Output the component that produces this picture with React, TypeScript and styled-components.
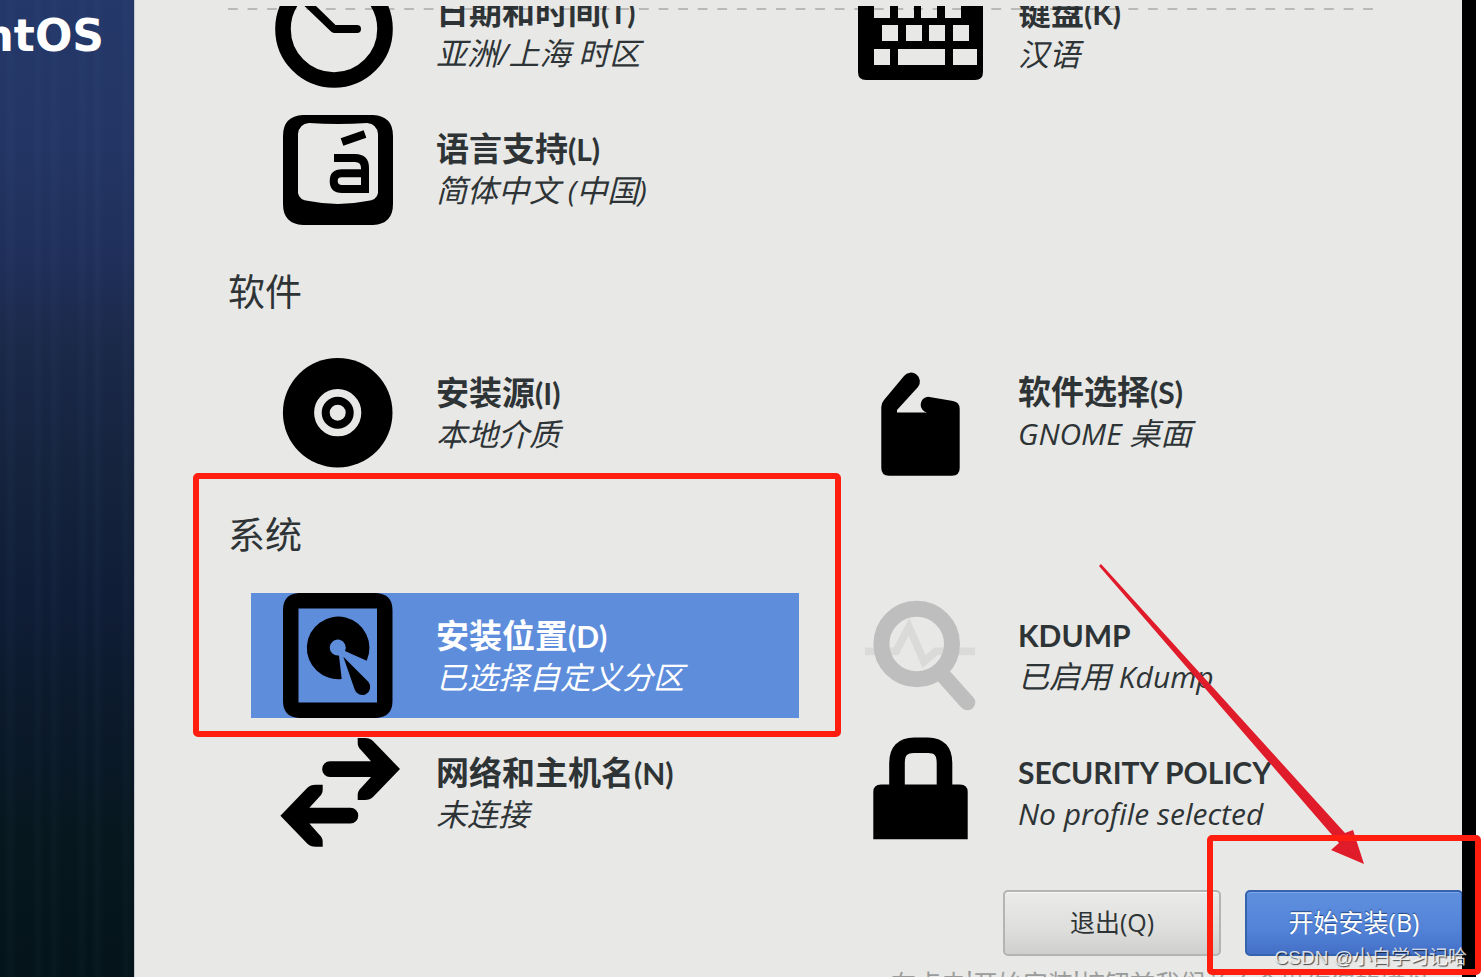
import React from "react";
import styled, { createGlobalStyle, css } from "styled-components";

const ink = "#2e3436";
const paper = "#e8e8e6";
const markRed = "#ff1e10";
const latinFonts = `"Open Sans", "Noto Sans CJK SC", sans-serif`;
const hanFonts = `"Noto Sans CJK SC", "Open Sans", sans-serif`;

const GlobalStyle = createGlobalStyle`
  * { box-sizing: border-box; }
  body { margin: 0; background: #fff; color: ${ink}; font-family: ${hanFonts}; }
  button { font: inherit; color: inherit; margin: 0; }
`;

const Page = styled.div`
  position: relative;
  display: flex;
  height: 100vh;
  padding-right: 7px;
  overflow: hidden;
`;

const Sidebar = styled.aside`
  flex: 0 0 134px;
  display: flex;
  justify-content: flex-end;
  align-items: flex-start;
  overflow: hidden;
  padding: 10px 30px 0 0;
  background:
    linear-gradient(
      to right,
      transparent 4px, rgba(120, 170, 220, 0.03) 10px, transparent 18px,
      transparent 32px, rgba(120, 170, 220, 0.03) 38px, transparent 44px,
      transparent 48px, rgba(120, 170, 220, 0.03) 54px, transparent 62px,
      transparent 76px, rgba(120, 170, 220, 0.03) 82px, transparent 88px,
      transparent 92px, rgba(120, 170, 220, 0.04) 97px, transparent 104px,
      transparent 120px, rgba(120, 170, 220, 0.03) 126px, transparent 132px
    ),
    linear-gradient(
      to bottom,
      #243869 0%, #233564 15%, #20305c 25%, #1b294a 35%,
      #15233d 48%, #101d37 61%, #0b192a 74%, #07171e 86%, #04141a 100%
    );
`;

const Brand = styled.div`
  font: 700 44px/52px "DejaVu Sans", sans-serif;
  color: #fff;
`;

const Panel = styled.main`
  position: relative;
  flex: 1;
  min-width: 0;
  overflow: hidden;
  background: ${paper};
  box-shadow: inset 1px 0 #c3c6cb;
`;

const BlackEdge = styled.div`
  flex: 0 0 14px;
  background: #000;
`;

const OverflowHint = styled.svg`
  position: absolute;
  top: 8px;
  left: 94px;
  width: calc(100% - 183px);
  height: 2px;
`;

const Scroller = styled.div`
  margin-top: 6px;
  overflow: hidden;
`;

const Hub = styled.div`
  margin-top: -36px;
`;

const SectionTitle = styled.h2`
  display: flex;
  align-items: center;
  height: 118px;
  margin: 0 0 0 94px;
  padding-bottom: 2px;
  font-size: 37px;
  font-weight: 400;
`;

const SpokeGrid = styled.div`
  display: grid;
  grid-template-columns: 1fr 1fr;
  gap: 12px 34px;
  padding: 0 81px 0 117px;
`;

const Spoke = styled.button<{ $selected?: boolean }>`
  display: flex;
  align-items: center;
  gap: 36px;
  height: 125px;
  padding: 0 0 0 24px;
  border: 0;
  text-align: left;
  background: none;
  ${(p) => p.$selected && css`
    background: #5e8ddc;
    color: #fff;
  `}
`;

const IconBox = styled.svg`
  flex: none;
  width: 125px;
  height: 125px;
  overflow: visible;
`;

const SpokeText = styled.span`
  display: grid;
  padding-bottom: 4px;
  white-space: nowrap;
`;

const SpokeName = styled.span`
  font-size: 33px;
  line-height: 42px;
  font-weight: 700;
`;

const SpokeStatus = styled.span`
  font-size: 31px;
  line-height: 38px;
  font-style: italic;
  font-weight: 400;
`;

const NameLatin = styled.span`
  font-family: Lato, sans-serif;
  font-size: 30px;
`;

const StatusLatin = styled.span`
  font-family: ${latinFonts};
  font-size: 30px;
`;

const Footer = styled.footer`
  display: grid;
  justify-items: end;
  gap: 11px;
  margin: 35px -1px 0 0;
`;

const Actions = styled.div`
  display: flex;
  gap: 24px;
`;

const ActionButton = styled.button<{ $primary?: boolean }>`
  width: 218px;
  height: 66px;
  padding: 0 0 5px;
  border: 2px solid #b4b5b2;
  border-radius: 5px;
  font-family: ${latinFonts};
  font-size: 25px;
  background: linear-gradient(#ebebea, #dededd 60%, #cfcfcd);
  box-shadow: inset 0 1px #f8f8f7;
  ${(p) => p.$primary && css`
    border-color: #3663ae;
    color: #fff;
    background: linear-gradient(#5f90de, #5283d8 60%, #4470c6);
    box-shadow: inset 0 1px #7aa5e8;
    text-shadow: 0 -1px 1px #24457f;
  `}
`;

const Note = styled.p`
  margin: 0 8px 0 0;
  font-size: 25px;
  line-height: 30px;
  white-space: nowrap;
  color: #9a9c9b;
`;

const MarkFrame = styled.div`
  position: absolute;
  border: 6px solid ${markRed};
  border-radius: 5px;
  pointer-events: none;
`;

const LocationMark = styled(MarkFrame)`
  top: 473px;
  left: 193px;
  width: calc(50% - 94px);
  height: 264px;
`;

const BeginMark = styled(MarkFrame)`
  top: 835px;
  right: 2px;
  width: 274px;
  height: 140px;
`;

const ArrowMark = styled.svg`
  position: absolute;
  top: 564px;
  right: 118px;
  width: 266px;
  height: 301px;
  pointer-events: none;
`;

const Watermark = styled.div`
  position: absolute;
  right: 16px;
  bottom: 5px;
  font: 400 19px/28px "Liberation Sans", "Noto Sans CJK SC", sans-serif;
  color: rgba(255, 255, 255, 0.8);
  text-shadow: 1px 1px 1px rgba(0, 0, 0, 0.7);
`;

const icons = {
  clock: (
    <>
      <circle cx="59" cy="59" r="51" fill="none" stroke="#000" strokeWidth="15.6" />
      <path d="M28 29 59 59H82" fill="none" stroke="#000" strokeWidth="8" strokeLinecap="round" strokeLinejoin="round" />
    </>
  ),
  keyboard: (
    <path
      fillRule="evenodd"
      d="M9 16H118Q126 16 126 24V102Q126 110 118 110H9Q1 110 1 102V24Q1 16 9 16Z
      M17 32V48H33V32ZM41 32V48H57V32ZM64 32V48H80V32ZM88 32V48H104V32Z
      M25 55V71H41V55ZM49 55V71H65V55ZM72 55V71H88V55ZM96 55V71H112V55Z
      M17 79V95H33V79ZM41 79V95H88V79ZM96 79V95H120V79Z"
    />
  ),
  language: (
    <>
      <path
        fillRule="evenodd"
        d="M28 8H98Q118 9 118 29V97Q118 117 98 118H28Q8 117 8 97V29Q8 9 28 8Z
        M23 27Q24 17 34 16Q63 18 92 16Q102 17 103 27V86Q102 93 92 94Q63 100 34 94Q24 93 23 86Z"
      />
      <path d="M67 35 90 27M59 51H80Q90 51 90 61V82H67Q58.7 82 58.7 74Q58.7 66.3 67 66.3H90" fill="none" stroke="#000" strokeWidth="8" />
    </>
  ),
  disc: (
    <>
      <circle cx="62.7" cy="62.7" r="54.8" />
      <circle cx="62.7" cy="62.7" r="19.8" fill="none" stroke={paper} strokeWidth="7.6" />
      <circle cx="62.7" cy="62.7" r="8" fill={paper} />
    </>
  ),
  package: (
    <path d="M24.3 57Q24.3 53 27 50L47 26A8.8 8.8 0 0 1 61 37L40 60V62.5H70A8 8 0 0 1 71 46.7L96 51Q102.7 52 102.7 59V118Q102.7 125.7 95 125.7H32Q24.3 125.7 24.3 118Z" />
  ),
  drive: (
    <>
      <path fillRule="evenodd" d="M24 0H101Q117.5 1 117.5 17V108Q117.5 124 101 125H24Q8 124 8 108V17Q8 1 24 0ZM23.5 15.5V109.5H102V15.5Z" />
      <path d="M91.7 67.7A31.3 31.3 0 1 0 66.7 86L64 62.5A8 8 0 1 1 70 58Z" />
      <path d="M68.3 63.7 93.5 89A8 8 0 1 1 79.5 96Z" />
    </>
  ),
  kdump: (
    <g fill="none">
      <path d="M8 58.3H39L52 34 67 68.5 79 58.3H118" stroke="#dadad9" strokeWidth="7.8" />
      <circle cx="59.7" cy="51" r="35.3" stroke="#bebebe" strokeWidth="16" />
      <path d="M84 80 110.3 109.5" stroke="#bebebe" strokeWidth="15.6" />
      <circle cx="110.5" cy="109.5" r="7.8" fill="#bebebe" />
    </g>
  ),
  network: (
    <>
      <path id="net-arrow" d="M96 47H55A7.8 7.8 0 0 1 55 31.3H96L86 20Q82.7 17 82.7 13V8H90Q95 8 98 11L125 39 98 67Q95 70 90 70H82.7V65Q82.7 61 86 58Z" />
      <use href="#net-arrow" transform="rotate(180 65.2 62.4)" />
    </>
  ),
  lock: (
    <>
      <path d="M24 54.5H103Q110.7 54.5 110.7 62V109.3H16.3V62Q16.3 54.5 24 54.5Z" />
      <path d="M40 60V33Q40 15.2 57 15.2H71Q87.5 15.2 87.5 33V60" fill="none" stroke="#000" strokeWidth="15.6" />
    </>
  ),
};

// Latin runs are set a little smaller than the Han text beside them.
function mixed(text: string, Latin: React.ElementType) {
  return text
    .split(/([\x20-\x7e]+)/)
    .filter(Boolean)
    .map((run, i) => (/^[\x20-\x7e]/.test(run) ? <Latin key={i}>{run}</Latin> : run));
}

interface SpokeItemProps {
  icon: keyof typeof icons;
  name: string;
  status: string;
  selected?: boolean;
}

function SpokeItem({ icon, name, status, selected }: SpokeItemProps) {
  return (
    <Spoke type="button" $selected={selected}>
      <IconBox viewBox="0 0 125 125" aria-hidden="true">{icons[icon]}</IconBox>
      <SpokeText>
        <SpokeName>{mixed(name, NameLatin)}</SpokeName>
        <SpokeStatus>{mixed(status, StatusLatin)}</SpokeStatus>
      </SpokeText>
    </Spoke>
  );
}

export default function App() {
  return (
    <Page lang="zh-CN">
      <GlobalStyle />
      <Sidebar>
        <Brand>CentOS</Brand>
      </Sidebar>
      <Panel>
        <Scroller>
          <Hub>
            <SpokeGrid>
              <SpokeItem icon="clock" name="日期和时间(T)" status="亚洲/上海 时区" />
              <SpokeItem icon="keyboard" name="键盘(K)" status="汉语" />
              <SpokeItem icon="language" name="语言支持(L)" status="简体中文 (中国)" />
            </SpokeGrid>
            <SectionTitle>软件</SectionTitle>
            <SpokeGrid>
              <SpokeItem icon="disc" name="安装源(I)" status="本地介质" />
              <SpokeItem icon="package" name="软件选择(S)" status="GNOME 桌面" />
            </SpokeGrid>
            <SectionTitle>系统</SectionTitle>
            <SpokeGrid>
              <SpokeItem icon="drive" name="安装位置(D)" status="已选择自定义分区" selected />
              <SpokeItem icon="kdump" name="KDUMP" status="已启用 Kdump" />
              <SpokeItem icon="network" name="网络和主机名(N)" status="未连接" />
              <SpokeItem icon="lock" name="SECURITY POLICY" status="No profile selected" />
            </SpokeGrid>
          </Hub>
        </Scroller>
        <OverflowHint aria-hidden="true">
          <line x1="0" y1="1" x2="100%" y2="1" pathLength={585} stroke="#000" strokeOpacity="0.2" strokeWidth="2" strokeDasharray="5 5" />
        </OverflowHint>
        <Footer>
          <Actions>
            <ActionButton type="button">退出(Q)</ActionButton>
            <ActionButton type="button" $primary>开始安装(B)</ActionButton>
          </Actions>
          <Note>在点击'开始安装'按钮前我们并不会操作您的磁盘。</Note>
        </Footer>
      </Panel>
      <BlackEdge />
      <ArrowMark viewBox="0 0 266 301" aria-hidden="true">
        <path d="M0 2 2 0 246 269 254 266 265 300 232 286 240 279Z" fill="#e01b2a" />
      </ArrowMark>
      <LocationMark />
      <BeginMark />
      <Watermark>CSDN @小白学习记哈</Watermark>
    </Page>
  );
}
